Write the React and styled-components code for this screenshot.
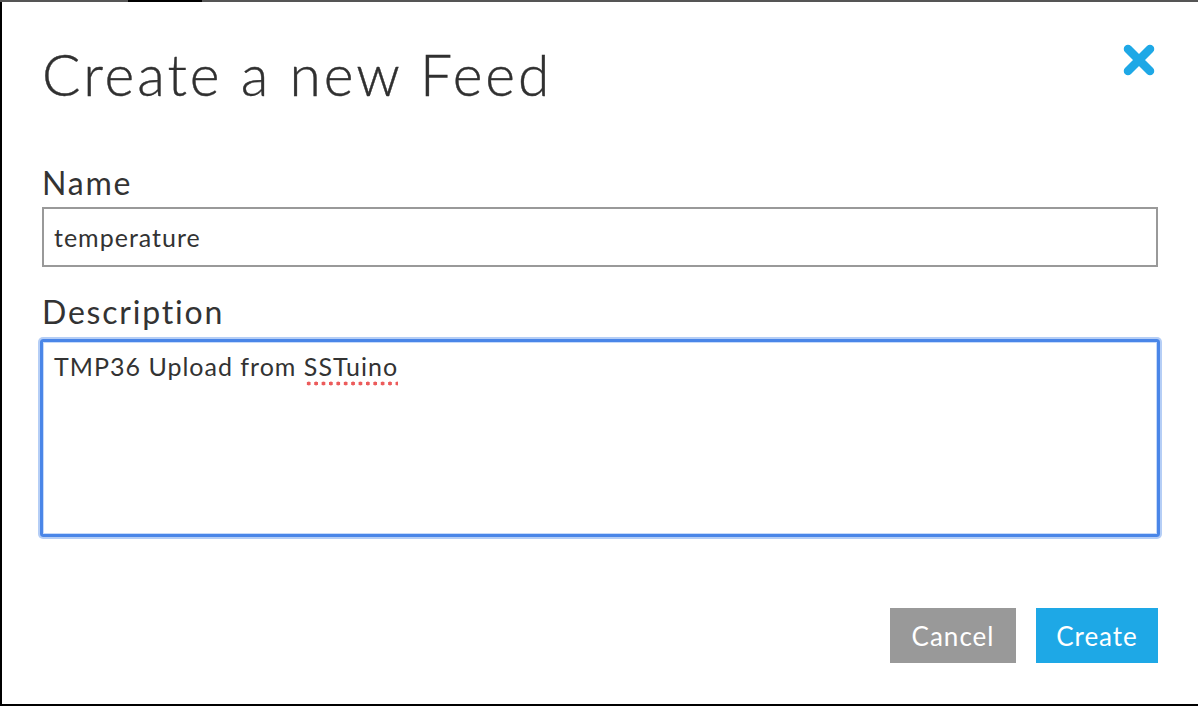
import React, { useState } from "react";
import styled, { createGlobalStyle } from "styled-components";

const GlobalStyle = createGlobalStyle`
  html, body {
    margin: 0;
    padding: 0;
    background: #fff;
  }
  * {
    box-sizing: border-box;
  }
`;

const Frame = styled.div`
  width: 1198px;
  height: 706px;
  display: flex;
  flex-direction: column;
  background: #fff;
  overflow: hidden;
  font-family: "Lato", "Open Sans", sans-serif;
  color: #333;
`;

const TopEdge = styled.div`
  height: 2px;
  flex: none;
  background: linear-gradient(
    to right,
    #555 0,
    #555 128px,
    #000 128px,
    #000 202px,
    #555 202px,
    #555 100%
  );
`;

const Dialog = styled.div`
  flex: 1;
  display: flex;
  flex-direction: column;
  border-left: 2px solid #000;
  border-bottom: 2px solid #000;
  padding: 32px 40px 0 40px;
`;

const Header = styled.div`
  display: flex;
  justify-content: space-between;
  align-items: flex-start;
`;

const Title = styled.h1`
  margin: 0;
  font-size: 57px;
  font-weight: 300;
  line-height: 80px;
  letter-spacing: 2.9px;
  color: #303030;
  -webkit-text-stroke: 0.4px #303030;
`;

const CloseButton = styled.button`
  border: 0;
  background: none;
  padding: 0;
  margin: 9px 2px 0 0;
  width: 34px;
  height: 34px;
  cursor: pointer;
`;

const Field = styled.div`
  display: flex;
  flex-direction: column;
  margin-top: ${(p) => p.$top}px;
`;

const Label = styled.label`
  font-size: 32px;
  line-height: 36px;
  color: #333;
  margin-bottom: 6px;
  letter-spacing: 1.8px;
`;

const TextInput = styled.div`
  height: 60px;
  border: 2px solid #999;
  padding: 0 10px;
  display: flex;
  align-items: center;
  font-size: 25px;
  letter-spacing: 1px;
  color: #333;
`;

const TextArea = styled.div`
  height: 198px;
  margin: 3px -2px 0;
  border: 3px solid #4a86e8;
  border-radius: 3px;
  box-shadow: 0 0 0 2px #b5cef6, inset 0 0 0 1px #c6dafa;
  padding: 9px 11px;
  font-size: 25px;
  line-height: 30px;
  letter-spacing: 1px;
  color: #333;
`;

const Misspelled = styled.span`
  background-image: radial-gradient(circle, #ec5b5b 1.8px, transparent 2.2px);
  background-size: 7.4px 5px;
  background-repeat: repeat-x;
  background-position: 1px 100%;
  padding-bottom: 5px;
`;

const Actions = styled.div`
  margin-top: auto;
  margin-bottom: 41px;
  display: flex;
  justify-content: flex-end;
  gap: 20px;
`;

const Button = styled.button`
  width: ${(p) => p.$width}px;
  height: 55px;
  padding: 0;
  border: 0;
  font-family: inherit;
  font-size: 26px;
  letter-spacing: 1px;
  color: #fff;
  background: ${(p) => (p.$primary ? "#1ea8e6" : "#999")};
  cursor: pointer;
`;

function CloseIcon() {
  return (
    <svg width="34" height="34" viewBox="0 0 34 34">
      <path
        d="M6 6 L28 28 M28 6 L6 28"
        stroke="#1ea8e6"
        strokeWidth="8.5"
        strokeLinecap="round"
      />
    </svg>
  );
}

export default function App() {
  const [name] = useState("temperature");

  return (
    <>
      <GlobalStyle />
      <Frame>
        <TopEdge />
        <Dialog>
          <Header>
            <Title>Create a new Feed</Title>
            <CloseButton aria-label="Close">
              <CloseIcon />
            </CloseButton>
          </Header>
          <Field $top={51}>
            <Label>Name</Label>
            <TextInput>{name}</TextInput>
          </Field>
          <Field $top={27}>
            <Label>Description</Label>
            <TextArea>
              TMP36 Upload from <Misspelled>SSTuino</Misspelled>
            </TextArea>
          </Field>
          <Actions>
            <Button $width={126}>Cancel</Button>
            <Button $primary $width={122}>
              Create
            </Button>
          </Actions>
        </Dialog>
      </Frame>
    </>
  );
}
